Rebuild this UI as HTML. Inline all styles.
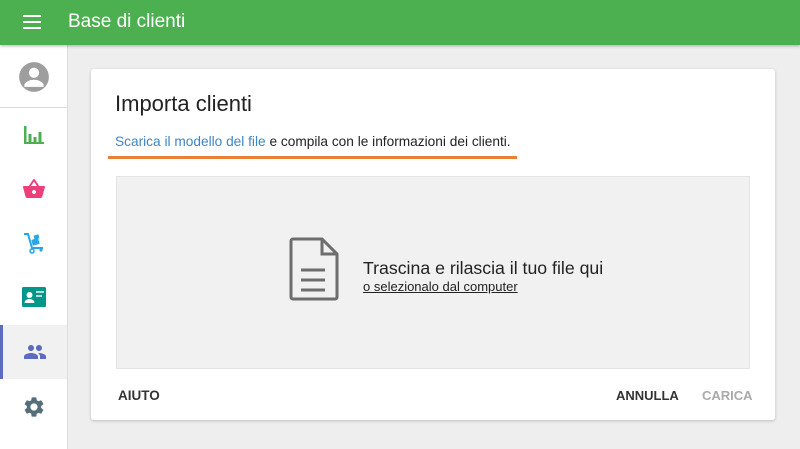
<!DOCTYPE html>
<html><head><meta charset="utf-8"><style>
*{box-sizing:border-box;margin:0;padding:0}
body{width:800px;height:449px;overflow:hidden;background:#eeeeee;font-family:"Liberation Sans",sans-serif;position:relative}
.hdr{position:absolute;left:0;top:0;width:800px;height:45px;background:#4caf50;box-shadow:0 1px 3px rgba(0,0,0,.3);z-index:2}
.hdr .t{position:absolute;left:68px;top:11px;color:#fff;font-size:19px}
.side{position:absolute;left:0;top:45px;width:68px;height:404px;background:#fff;border-right:1px solid #ddd}
.ic{position:absolute;left:0;width:67px;height:54px;display:flex;align-items:center;justify-content:center}
.card{position:absolute;left:91px;top:69px;width:684px;height:351px;background:#fff;border-radius:3px;box-shadow:0 1px 3px rgba(0,0,0,.2)}
.abs{position:absolute}
</style></head><body>
<div class="hdr">
<svg class="abs" style="left:23px;top:15px" width="18" height="14"><rect y="0" width="18" height="2" fill="#fff"/><rect y="6" width="18" height="2" fill="#fff"/><rect y="12" width="18" height="2" fill="#fff"/></svg>
<div class="t">Base di clienti</div></div>
<div class="side">
<div class="ic" style="top:5px"><svg width="34" height="34" viewBox="0 0 24 24"><circle cx="12" cy="12" r="10.5" fill="#9e9e9e"/><circle cx="12" cy="9" r="3.6" fill="#fff"/><path fill="#fff" d="M5.2 17.2c1.2-2.2 4.2-3.3 6.8-3.3s5.6 1.1 6.8 3.3V19H5.2z"/></svg></div>
<div class="abs" style="left:0;top:62px;width:67px;height:1px;background:#ddd"></div>
<div class="ic" style="top:63px"><svg width="22" height="22" viewBox="0 0 22 22"><path fill="#4caf50" d="M1 2h2.5v18H1zM1 18h20v2H1zM5.5 10h3v9h-3zM10.5 13h3v6h-3zM15.5 8h3v11h-3z"/></svg></div>
<div class="ic" style="top:117px"><svg width="24" height="24" viewBox="0 0 24 24"><path fill="#ec407a" d="M17.2 9l-4.4-6.6c-.2-.3-.5-.4-.8-.4s-.6.1-.8.4L6.8 9H2c-.6 0-1 .4-1 1v.3l2.5 9.3c.2.8 1 1.4 1.9 1.4h13c.9 0 1.7-.6 1.9-1.5L22.9 10.3 23 10c0-.6-.4-1-1-1h-4.8zM9 9l3-4.4L15 9H9zm3 8c-1.1 0-2-.9-2-2s.9-2 2-2 2 .9 2 2-.9 2-2 2z"/></svg></div>
<div class="ic" style="top:171px"><svg width="24" height="24" viewBox="0 0 24 24"><path fill="none" stroke="#29a5e8" stroke-width="2" d="M2 3h4l4 14h11"/><rect x="10" y="8" width="7" height="6" fill="#29a5e8" transform="rotate(-15 13 11)"/><rect x="12" y="4" width="5" height="4" fill="#29a5e8" transform="rotate(-15 14 6)"/><circle cx="10" cy="20" r="2" fill="none" stroke="#29a5e8" stroke-width="1.5"/><circle cx="19" cy="19" r="1.6" fill="#29a5e8"/></svg></div>
<div class="ic" style="top:225px"><svg width="24" height="20" viewBox="0 0 24 20"><rect x="0" y="0" width="24" height="20" rx="1.5" fill="#009688"/><circle cx="7.5" cy="8" r="3" fill="#fff"/><path fill="#fff" d="M2.5 16c0-3 3-4 5-4s5 1 5 4z"/><rect x="14" y="4" width="8" height="2" fill="#b2dfdb"/><rect x="14" y="8" width="6" height="2" fill="#b2dfdb"/></svg></div>
<div class="ic" style="top:280px;background:#f1f1f1;border-left:3px solid #5c6bc0"><svg width="24" height="24" viewBox="0 0 24 24"><path fill="#5c6bc0" d="M16 11c1.66 0 2.99-1.34 2.99-3S17.66 5 16 5c-1.66 0-3 1.34-3 3s1.34 3 3 3zm-8 0c1.66 0 2.99-1.34 2.99-3S9.66 5 8 5C6.34 5 5 6.34 5 8s1.34 3 3 3zm0 2c-2.33 0-7 1.17-7 3.5V19h14v-2.5c0-2.33-4.67-3.5-7-3.5zm8 0c-.29 0-.62.02-.97.05 1.16.84 1.97 1.970 1.97 3.45V19h6v-2.5c0-2.33-4.67-3.5-7-3.5z"/></svg></div>
<div class="ic" style="top:335px"><svg width="24" height="24" viewBox="0 0 24 24"><path fill="#546e7a" d="M19.14 12.94c.04-.3.06-.61.06-.94 0-.32-.02-.64-.07-.94l2.03-1.58c.18-.14.23-.41.12-.61l-1.92-3.32c-.12-.22-.37-.29-.59-.22l-2.39.96c-.5-.38-1.03-.7-1.62-.94l-.36-2.54c-.04-.24-.24-.41-.48-.41h-3.84c-.24 0-.43.17-.47.41l-.36 2.54c-.59.24-1.13.57-1.62.94l-2.39-.96c-.22-.08-.47 0-.59.22L2.74 8.87c-.12.21-.08.47.12.61l2.03 1.58c-.05.3-.09.63-.09.94s.02.64.07.94l-2.03 1.58c-.18.14-.23.41-.12.61l1.92 3.32c.12.22.37.29.59.22l2.39-.96c.5.38 1.03.7 1.62.94l.36 2.54c.05.24.24.41.48.41h3.84c.24 0 .44-.17.47-.41l.36-2.54c.59-.24 1.13-.56 1.62-.94l2.39.96c.22.08.47 0 .59-.22l1.92-3.32c.12-.22.07-.47-.12-.61l-2.01-1.58zM12 15.6c-1.98 0-3.6-1.62-3.6-3.6s1.62-3.6 3.6-3.6 3.6 1.62 3.6 3.6-1.62 3.6-3.6 3.6z"/></svg></div>
</div>
<div class="card">
<div class="abs" style="left:24px;top:22px;font-size:22px;color:#222">Importa clienti</div>
<div class="abs" style="left:24px;top:65px;font-size:13.7px;color:#222"><span style="color:#3b86c6">Scarica il modello del file</span> e compila con le informazioni dei clienti.</div>
<div class="abs" style="left:17px;top:87px;width:409px;height:3px;background:#e8803a"></div>
<div class="abs" style="left:25px;top:107px;width:634px;height:193px;background:#f1f1f1;border:1px solid #e4e4e4"></div>
<svg class="abs" style="left:198px;top:168px" width="52" height="64" viewBox="0 0 52 64"><path fill="none" stroke="#6d6d6d" stroke-width="3" d="M4 2h29l15 15v43a2 2 0 0 1-2 2H4a2 2 0 0 1-2-2V4a2 2 0 0 1 2-2zM33 2v15h15"/><path stroke="#6d6d6d" stroke-width="3" d="M12 33h24M12 43h24M12 53h24"/></svg>
<div class="abs" style="left:272px;top:189px;font-size:17.7px;color:#222">Trascina e rilascia il tuo file qui</div>
<div class="abs" style="left:272px;top:210px;font-size:13px;color:#222;text-decoration:underline">o selezionalo dal computer</div>
<div class="abs" style="left:27px;top:319px;font-size:13.5px;font-weight:bold;color:#333">AIUTO</div>
<div class="abs" style="left:525px;top:319px;font-size:13px;font-weight:bold;color:#333">ANNULLA</div>
<div class="abs" style="left:611px;top:319px;font-size:13px;font-weight:bold;color:#aaa">CARICA</div>
</div>
</body></html>
